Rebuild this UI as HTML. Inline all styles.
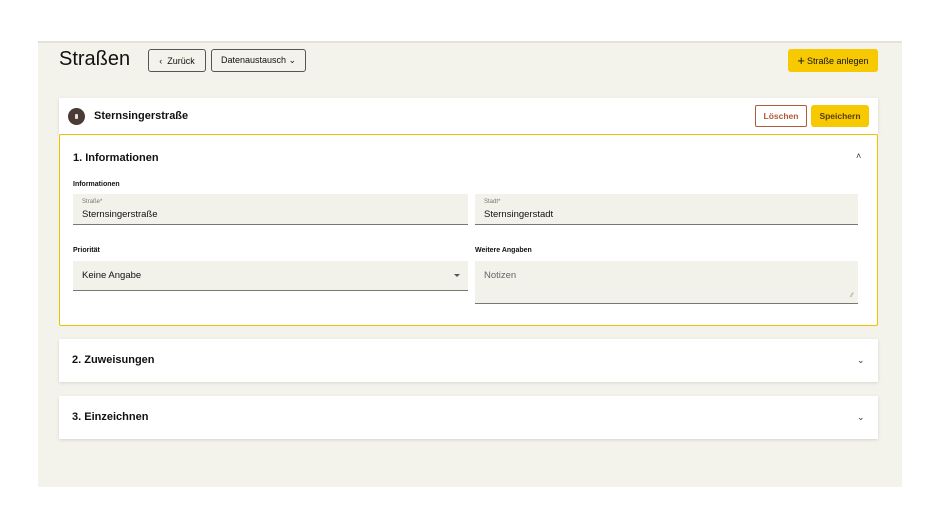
<!DOCTYPE html>
<html><head><meta charset="utf-8"><style>
*{box-sizing:border-box;margin:0;padding:0}
body{width:940px;height:528px;background:#fff;font-family:"Liberation Sans",sans-serif;color:#111;position:relative;overflow:hidden}
.a{position:absolute}
.wrap{left:38px;top:41px;width:864px;height:446px;background:#f3f2eb;border-top:2px solid #e4e2d8}
.btn{position:absolute;border:1px solid #555;border-radius:3px;font-size:9px;display:flex;align-items:center;justify-content:center;background:#f3f2eb}
.y{background:#f7c900;border:none;font-size:9px}
.card{position:absolute;left:59px;width:819px;background:#fff;box-shadow:0 1px 3px rgba(0,0,0,.12)}
.field{position:absolute;background:#f2f1ea;border-bottom:1px solid #777}
.lbl{position:absolute;font-size:6px;color:#777;left:9px;top:5px}
.val{position:absolute;font-size:9.5px;left:9px;top:15px}
.h{position:absolute;font-size:11px;font-weight:bold}
.sm{position:absolute;font-size:7px;font-weight:bold}
.chev{position:absolute;font-size:9px;color:#333}
</style></head><body>
<div class="a wrap"></div>
<div class="a" style="left:59px;top:48px;font-size:20px">Straßen</div>
<div class="btn" style="left:148px;top:49px;width:58px;height:23px">‹&nbsp; Zurück</div>
<div class="btn" style="left:211px;top:49px;width:95px;height:23px">Datenaustausch ⌄</div>
<div class="btn y" style="left:788px;top:49px;width:90px;height:23px"><span style="font-size:13px;margin-right:2px">+</span>Straße anlegen</div>

<div class="card" style="top:98px;height:36px">
 <div class="a" style="left:9px;top:10px;width:17px;height:17px;border-radius:50%;background:#4a3b37"><div class="a" style="left:7px;top:6px;width:3px;height:5px;background:#e8e0dc;border-radius:1px"></div></div>
 <div class="a" style="left:35px;top:12px;font-size:11px;font-weight:bold">Sternsingerstraße</div>
 <div class="btn" style="left:696px;top:7px;width:52px;height:22px;background:#fff;border-color:#b05a3a;color:#b05a3a;font-weight:bold;font-size:8.5px;border-radius:2px">Löschen</div>
 <div class="btn y" style="left:752px;top:7px;width:58px;height:22px;font-weight:bold;font-size:8.5px;color:#5a3a10">Speichern</div>
</div>

<div class="card" style="top:134px;height:192px;border:1px solid #e9c400;border-radius:2px;box-shadow:none">
 <div class="h" style="left:13px;top:17px">1. Informationen</div>
 <div class="chev" style="left:796px;top:16px">˄</div>
 <div class="sm" style="left:13px;top:46px">Informationen</div>
 <div class="field" style="left:13px;top:59px;width:395px;height:31px"><div class="lbl">Straße*</div><div class="val">Sternsingerstraße</div></div>
 <div class="field" style="left:415px;top:59px;width:383px;height:31px"><div class="lbl">Stadt*</div><div class="val">Sternsingerstadt</div></div>
 <div class="sm" style="left:13px;top:112px">Priorität</div>
 <div class="sm" style="left:415px;top:112px">Weitere Angaben</div>
 <div class="field" style="left:13px;top:126px;width:395px;height:30px"><div class="val" style="top:9px">Keine Angabe</div><div class="a" style="right:8px;top:13px;border:3px solid transparent;border-top:3px solid #555"></div></div>
 <div class="field" style="left:415px;top:126px;width:383px;height:43px"><div class="val" style="top:9px;color:#666">Notizen</div><div class="a" style="right:5px;bottom:4px;font-size:6px;color:#888">⁄⁄</div></div>
</div>

<div class="card" style="top:339px;height:43px"><div class="h" style="left:13px;top:15px">2. Zuweisungen</div><div class="chev" style="left:798px;top:16px">⌄</div></div>
<div class="card" style="top:396px;height:43px"><div class="h" style="left:13px;top:15px">3. Einzeichnen</div><div class="chev" style="left:798px;top:16px">⌄</div></div>
</body></html>
